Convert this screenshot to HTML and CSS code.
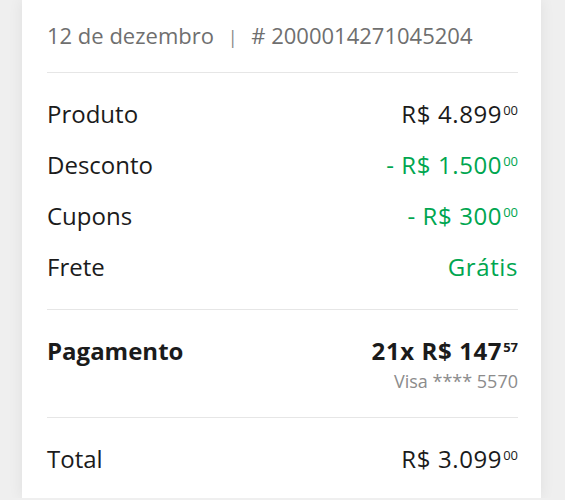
FILE: index.html
```html
<!DOCTYPE html>
<html lang="pt-BR">
<head>
<meta charset="UTF-8">
<meta name="viewport" content="width=device-width, initial-scale=1.0">
<title>Detalhe da compra</title>
<link rel="stylesheet" href="styles.css">
</head>
<body>
<div class="card">
 <!-- Cabecalho -->
 <div class="header">12 de dezembro <span class="sep">|</span> # 2000014271045204</div>

 <!-- Resumo -->
 <div class="section resumo">
 <div class="row">
 <span>Produto</span>
 <span class="price">R$ 4.899<span class="cents">00</span></span>
 </div>
 <div class="row">
 <span>Desconto</span>
 <span class="price green">- R$ 1.500<span class="cents">00</span></span>
 </div>
 <div class="row">
 <span>Cupons</span>
 <span class="price green">- R$ 300<span class="cents">00</span></span>
 </div>
 <div class="row">
 <span>Frete</span>
 <span class="price green">Grátis</span>
 </div>
 </div>

 <!-- Pagamento -->
 <div class="section pagamento">
 <div class="row bold">
 <span>Pagamento</span>
 <span class="price">21x R$ 147<span class="cents">57</span></span>
 </div>
 <div class="cartao">Visa **** 5570</div>
 </div>

 <!-- Total -->
 <div class="section total">
 <div class="row">
 <span>Total</span>
 <span class="price">R$ 3.099<span class="cents">00</span></span>
 </div>
 </div>
</div>
</body>
</html>
```

FILE: styles.css
```css
body {
 margin: 0;
 background-color: #efefef;
 font-family: "Open Sans", Lato, Arial, sans-serif;
 color: #1b1b1b;
}
.card {
 margin-left: 22px;
 width: 519px;
 box-sizing: border-box;
 padding: 0 23px 0 25px;
 background-color: #fff;
 box-shadow: 0 0 14px rgba(0, 0, 0, 0.07);
}
.header {
 height: 26px;
 padding: 22px 0 24px;
 font-size: 22px;
 line-height: 26px;
 color: #6f6f6f;
 border-bottom: 1px solid #e6e6e6;
}
.sep {
 margin: 0 8px;
 font-size: 18px;
 line-height: 0;
 color: #888;
}
.section {
 border-bottom: 1px solid #e6e6e6;
}
.resumo {
 padding: 15px 0 17px;
}
.row {
 display: flex;
 justify-content: space-between;
 align-items: center;
 height: 51px;
 font-size: 24px;
 line-height: 30px;
}
.pagamento {
 padding: 26px 0 26px;
}
.pagamento .row,
.total .row {
 height: 30px;
}
.bold {
 font-weight: 700;
}
.price {
 white-space: nowrap;
 letter-spacing: 0.6px;
}
.cents {
 margin-left: 1px;
 font-size: 13px;
 letter-spacing: 0;
 line-height: 0;
 vertical-align: 8px;
}
.green {
 color: #00a650;
}
.cartao {
 margin-top: 5px;
 text-align: right;
 font-size: 18px;
 line-height: 20px;
 color: #8c8c8c;
}
.total {
 border-bottom: none;
 padding: 26px 0 24px;
}
```
